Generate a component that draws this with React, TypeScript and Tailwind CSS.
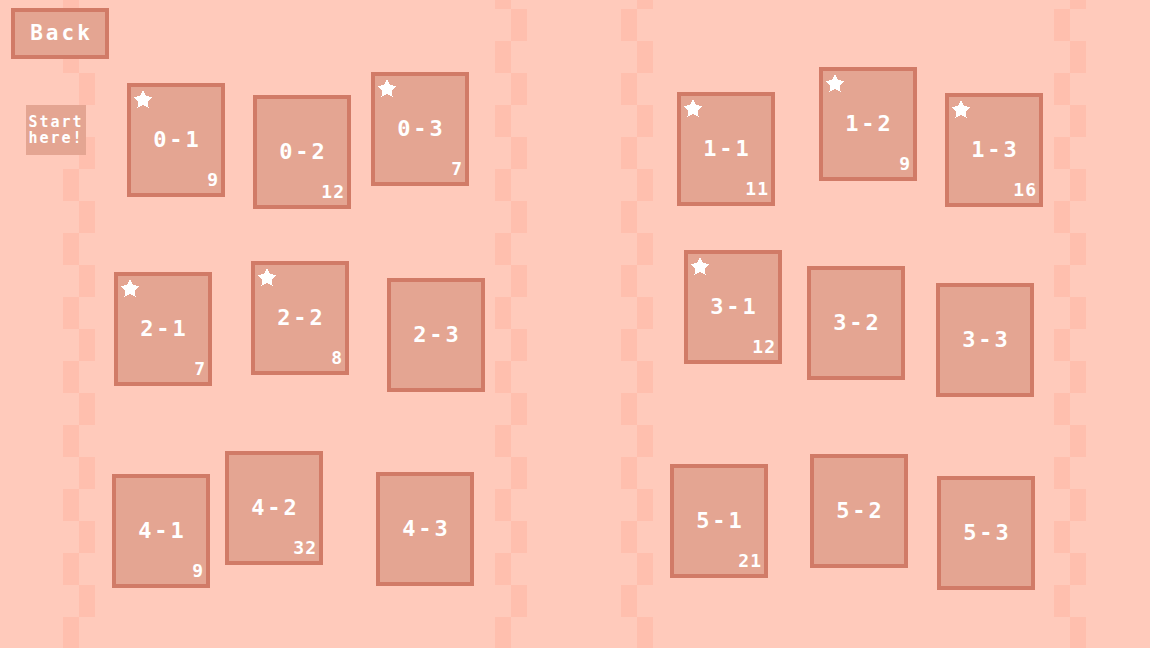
import React from 'react'

type Level = {
  id: string
  x: number
  y: number
  star?: boolean
  score?: number
}

// level nodes sit on a free map, so their coordinates are the data
const levels: Level[] = [
  { id: '0-1', x: 127, y: 83, star: true, score: 9 },
  { id: '0-2', x: 253, y: 95, score: 12 },
  { id: '0-3', x: 371, y: 72, star: true, score: 7 },
  { id: '2-1', x: 114, y: 272, star: true, score: 7 },
  { id: '2-2', x: 251, y: 261, star: true, score: 8 },
  { id: '2-3', x: 387, y: 278 },
  { id: '4-1', x: 112, y: 474, score: 9 },
  { id: '4-2', x: 225, y: 451, score: 32 },
  { id: '4-3', x: 376, y: 472 },
  { id: '1-1', x: 677, y: 92, star: true, score: 11 },
  { id: '1-2', x: 819, y: 67, star: true, score: 9 },
  { id: '1-3', x: 945, y: 93, star: true, score: 16 },
  { id: '3-1', x: 684, y: 250, star: true, score: 12 },
  { id: '3-2', x: 807, y: 266 },
  { id: '3-3', x: 936, y: 283 },
  { id: '5-1', x: 670, y: 464, score: 21 },
  { id: '5-2', x: 810, y: 454 },
  { id: '5-3', x: 937, y: 476 },
]

const font = "font-['DejaVu_Sans_Mono','Liberation_Mono',monospace] font-bold text-white"

function Star() {
  return (
    <svg width="18" height="18" viewBox="0 0 18 18" shapeRendering="crispEdges" className="absolute left-[3px] top-[3px]">
      <polygon
        points="9,0.5 11.8,6.1 18,7 13.6,11.5 14.6,17.7 9,14.8 3.4,17.7 4.4,11.5 0,7 6.2,6.1"
        fill="#ffffff"
      />
    </svg>
  )
}

// checkered stripe: two 16px columns, blocks 32px tall, alternating sides
function Stripe({ className, flip }: { className: string; flip?: boolean }) {
  const rows = Array.from({ length: 22 })
  return (
    <div className={`absolute top-[-23px] flex w-8 flex-col ${className}`}>
      {rows.map((_, i) => {
        const onLeft = flip ? i % 2 === 1 : i % 2 === 0
        return (
          <div key={i} className="h-8 w-8">
            <div className={`h-8 w-4 bg-[#ffbfae] ${onLeft ? 'ml-0' : 'ml-4'}`} />
          </div>
        )
      })}
    </div>
  )
}

function LevelCard({ level }: { level: Level }) {
  return (
    <div
      className="absolute flex h-[114px] w-[98px] items-center justify-center border-4 border-[#d17b67] bg-[#e4a592]"
      style={{ left: level.x, top: level.y }}
    >
      {level.star && <Star />}
      <span className={`pl-[3px] text-[22px] leading-none tracking-[3px] ${font}`}>{level.id}</span>
      {level.score !== undefined && (
        <span className={`absolute bottom-[4px] right-[2px] text-[18px] leading-none tracking-[1px] ${font}`}>
          {level.score}
        </span>
      )}
    </div>
  )
}

export default function App() {
  return (
    <div className="relative h-[648px] w-[1150px] overflow-hidden bg-[#ffcabb]">
      {/* background stripes */}
      <Stripe className="left-[63px]" />
      <Stripe className="left-[495px]" />
      <Stripe className="left-[621px]" flip />
      <Stripe className="left-[1054px]" flip />

      {/* top-left controls */}
      <div className="relative flex w-[120px] flex-col items-start pl-[11px] pt-[8px]">
        <button
          className={`flex h-[51px] w-[98px] items-center justify-center border-4 border-[#d17b67] bg-[#e4a592] pl-[3px] text-[21px] leading-none tracking-[3px] ${font}`}
        >
          Back
        </button>
        <div
          className={`ml-[15px] mt-[46px] flex h-[50px] w-[60px] flex-col items-center justify-center bg-[#e4a592] text-[15px] leading-[16px] tracking-[2px] ${font}`}
        >
          <span>Start</span>
          <span>here!</span>
        </div>
      </div>

      {/* level map */}
      {levels.map((l) => (
        <LevelCard key={l.id} level={l} />
      ))}
    </div>
  )
}
